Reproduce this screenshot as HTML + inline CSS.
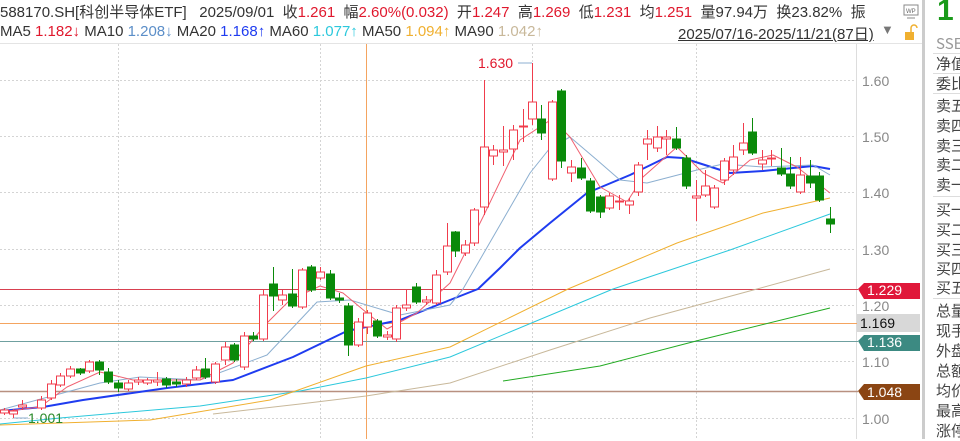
<!DOCTYPE html>
<html><head><meta charset="utf-8"><style>
body{margin:0;width:960px;height:439px;overflow:hidden;background:#fff;font-family:"Liberation Sans","Noto Sans CJK SC",sans-serif;position:relative}
.t{position:absolute;white-space:nowrap;font-size:15px;color:#333}
.r{color:#e0182d}
.rp{position:absolute;left:936px;font-size:15px;color:#444;font-family:"Noto Sans CJK SC",sans-serif;white-space:nowrap}
</style></head><body>
<div class="t" style="left:0;top:1px">588170.SH[科创半导体ETF] &nbsp; 2025/09/01 &nbsp;收<span class="r">1.261</span> &nbsp;幅<span class="r">2.60%(0.032)</span> &nbsp;开<span class="r">1.247</span> &nbsp;高<span class="r">1.269</span> &nbsp;低<span class="r">1.231</span> &nbsp;均<span class="r">1.251</span> &nbsp;量97.94万 &nbsp;换23.82% &nbsp;振</div>
<div class="t" style="left:0;top:23px">MA5 <span class="r">1.182↓</span> MA10 <span style="color:#5b8ec8">1.208↓</span> MA20 <span style="color:#1f3cf0">1.168↑</span> MA60 <span style="color:#2cc8dc">1.077↑</span> MA50 <span style="color:#f0b030">1.094↑</span> MA90 <span style="color:#c8b89a">1.042↑</span></div>
<div class="t" style="left:678px;top:23px;text-decoration:underline">2025/07/16-2025/11/21(87日)</div>
<div class="t" style="left:881px;top:22px;color:#777;font-size:13px">▼</div>
<svg style="position:absolute;left:902px;top:4px" width="18" height="38"><rect x="2" y="1" width="14" height="10" fill="#fff" stroke="#888"/><text x="4" y="9" font-size="6" fill="#666">WP</text><line x1="5" y1="14" x2="13" y2="14" stroke="#888"/><rect x="3" y="28" width="9" height="8" fill="#f0b030"/><path d="M9 28 V24 a3 3 0 0 1 6 0" fill="none" stroke="#f0b030" stroke-width="1.5"/></svg>
<svg style="position:absolute;left:0;top:0" width="925" height="439">
<line x1="0" y1="43.5" x2="925" y2="43.5" stroke="#e4e4e4"/>
<line x1="856.5" y1="44" x2="856.5" y2="439" stroke="#ddd"/>
<line x1="923.5" y1="0" x2="923.5" y2="439" stroke="#ccc" stroke-width="3"/>
<g stroke="#d4d4d4" stroke-dasharray="2,2">
<line x1="0" y1="80.5" x2="856" y2="80.5"/><line x1="0" y1="136.5" x2="856" y2="136.5"/><line x1="0" y1="192.5" x2="856" y2="192.5"/><line x1="0" y1="249.5" x2="856" y2="249.5"/><line x1="0" y1="305.5" x2="856" y2="305.5"/><line x1="0" y1="361.5" x2="856" y2="361.5"/><line x1="0" y1="418.5" x2="856" y2="418.5"/>
<line x1="118.5" y1="44" x2="118.5" y2="439"/><line x1="320.5" y1="44" x2="320.5" y2="439"/><line x1="532.5" y1="44" x2="532.5" y2="439"/><line x1="696.5" y1="44" x2="696.5" y2="439"/>
</g>
<line x1="366.5" y1="44" x2="366.5" y2="439" stroke="#f4a460"/>
<line x1="0" y1="289.5" x2="858" y2="289.5" stroke="#d84050"/>
<line x1="0" y1="323.5" x2="858" y2="323.5" stroke="#f4a460"/>
<line x1="0" y1="341.5" x2="858" y2="341.5" stroke="#6fa0a0"/>
<line x1="0" y1="391.5" x2="858" y2="391.5" stroke="#b89080" stroke-width="1.5"/>
<g fill="none" stroke-linejoin="round">
<polyline stroke="#c8b89a" points="213,414 300,404 366,396 450,383 550,350 650,318 757,289 830,269"/>
<polyline stroke="#22aa22" points="503,381 600,366 700,340 830,308"/>
<polyline stroke="#2cc8dc" points="0,424 60,418 200,406 300,391 366,378 450,357 613,289 730,250 830,214"/>
<polyline stroke="#f0b030" points="0,425 150,420 270,400 366,366 450,347 568,289 677,243 763,213 830,198"/>
<polyline stroke="#1f3cf0" stroke-width="2" points="0,411 43,407 83,400 167,388 233,380 293,357 347,331 400,320 450,300 478,289 500,268 520,248 550,223 587,193 630,175 667,157 683,158 730,173 763,171 813,166 830,169"/>
<polyline stroke="#8cafd0" points="0,410 100,383 140,377 200,380 267,355 317,302 350,300 400,315 450,305 463,289 500,225 530,173 550,148 570,137 597,160 620,180 647,183 697,170 723,164 763,167 813,165 830,175"/>
<polyline stroke="#f06070" points="0,412 40,407 67,387 100,372 133,380 200,380 233,363 267,323 290,300 320,286 343,293 367,313 387,329 417,313 450,283 483,217 520,140 552,119 570,137 600,187 627,202 643,177 677,147 703,173 723,183 750,160 773,155 797,167 830,193"/>
</g>
<g id="c"></g>
<text x="478" y="68" font-size="14" fill="#e0182d">1.630</text>
<line x1="518" y1="63" x2="532" y2="63" stroke="#8cafd0"/>
<text x="28" y="423" font-size="14" fill="#2a8a2a">1.001</text>
<line x1="14" y1="418" x2="28" y2="418" stroke="#8cafd0"/>
<g font-size="14" fill="#888"><text x="862" y="86">1.60</text><text x="862" y="142">1.50</text><text x="862" y="198">1.40</text><text x="862" y="255">1.30</text><text x="862" y="311">1.20</text><text x="862" y="367">1.10</text><text x="862" y="424">1.00</text></g>
<rect x="857" y="314" width="63" height="18" fill="#d8d8d8"/><text x="860" y="328" font-size="14" fill="#111">1.169</text>
<path d="M858 289 l6 -6 h56 v16 h-56z" fill="#e0183a"/><text x="867" y="295" font-size="14" fill="#fff">1.229</text>
<path d="M858 341 l6 -6 h56 v16 h-56z" fill="#3c8a82"/><text x="867" y="347" font-size="14" fill="#fff">1.136</text>
<path d="M858 391 l6 -7 h56 v16 h-56z" fill="#8b4513"/><text x="867" y="397" font-size="14" fill="#fff">1.048</text>
<rect x="925" y="293" width="10" height="146" fill="#eee"/>
<text x="926" y="367" font-size="11" fill="#888">»</text>
</svg>
<div style="position:absolute;left:937px;top:-6px;font-size:30px;font-weight:bold;color:#1a9a1a">1</div>
<div class="rp" style="top:33px;color:#999">SSE</div>
<div style="position:absolute;left:933px;top:53px;width:27px;border-top:1px solid #ddd"></div>
<div class="rp" style="top:53px">净值</div>
<div style="position:absolute;left:933px;top:73px;width:27px;border-top:1px solid #ddd"></div>
<div class="rp" style="top:73px">委比</div>
<div style="position:absolute;left:933px;top:93px;width:27px;border-top:1px solid #ddd"></div>
<div class="rp" style="top:95px">卖五</div><div class="rp" style="top:115px">卖四</div><div class="rp" style="top:135px">卖三</div><div class="rp" style="top:154px">卖二</div><div class="rp" style="top:174px">卖一</div>
<div style="position:absolute;left:933px;top:196px;width:27px;border-top:1px solid #ddd"></div>
<div class="rp" style="top:199px">买一</div><div class="rp" style="top:219px">买二</div><div class="rp" style="top:239px">买三</div><div class="rp" style="top:258px">买四</div><div class="rp" style="top:277px">买五</div>
<div style="position:absolute;left:933px;top:298px;width:27px;border-top:1px solid #ddd"></div>
<div class="rp" style="top:300px">总量</div><div class="rp" style="top:320px">现手</div><div class="rp" style="top:340px">外盘</div><div class="rp" style="top:360px">总额</div><div class="rp" style="top:380px">均价</div><div class="rp" style="top:400px">最高</div><div class="rp" style="top:420px">涨停</div>
<script>
var d=[[4,'r',410,413,408,415],[13,'r',411,414,409,418],[22,'r',405,407,400,410],[41,'r',400,408,396,410],[51,'r',384,398,380,400],[60,'r',376,385,373,387],[70,'r',369,376,366,378],[80,'g',369,373,368,375],[89,'r',362,371,360,373],[99,'g',362,370,360,375],[108,'g',372,382,368,384],[118,'g',383,388,380,392],[128,'r',383,389,380,391],[138,'r',380,382,377,385],[147,'r',380,383,378,385],[157,'r',380,382,372,386],[166,'g',379,385,377,388],[176,'g',382,384,379,387],[186,'r',380,384,377,387],[196,'r',370,378,366,380],[205,'g',369,377,358,379],[215,'r',364,382,362,384],[225,'r',347,360,342,365],[234,'g',345,360,343,362],[244,'r',336,367,332,370],[253,'g',336,339,332,341],[263,'r',295,339,290,341],[273,'g',284,296,267,311],[282,'r',295,300,290,305],[292,'g',294,306,269,308],[302,'r',270,307,268,309],[311,'g',267,290,265,292],[320,'r',272,278,267,280],[330,'g',274,298,270,300],[339,'g',298,300,293,303],[348,'g',306,345,303,356],[358,'r',322,345,318,347],[367,'r',313,327,310,334],[377,'g',321,336,319,338],[387,'r',335,337,331,340],[396,'r',308,339,305,342],[406,'r',305,308,290,311],[416,'g',287,302,283,304],[426,'r',300,302,296,305],[436,'r',275,303,270,305],[447,'r',246,272,223,275],[455,'g',232,251,231,257],[465,'r',245,253,240,256],[474,'r',210,243,208,246],[484,'r',147,207,80,215],[493,'r',150,156,145,165],[503,'r',150,152,126,166],[513,'r',130,149,125,160],[523,'r',126,127,109,142],[532,'r',102,119,63,125],[541,'g',119,133,105,140],[552,'r',102,179,100,181],[561,'g',91,161,89,168],[571,'r',167,173,160,182],[581,'g',168,178,158,180],[590,'g',181,211,178,213],[600,'g',197,212,195,218],[609,'r',196,208,193,210],[619,'r',201,202,195,210],[629,'r',201,205,198,214],[638,'r',165,192,162,196],[647,'r',139,144,130,160],[657,'r',137,148,126,152],[666,'r',137,139,130,155],[676,'g',139,148,127,150],[686,'g',158,186,155,189],[696,'r',196,198,180,221],[705,'r',186,195,170,197],[714,'r',188,207,185,209],[724,'r',161,180,158,185],[733,'r',157,170,145,175],[743,'r',143,150,123,155],[752,'g',132,153,118,155],[762,'r',160,164,150,170],[771,'r',158,159,150,166],[781,'g',168,174,148,176],[790,'g',174,186,157,189],[800,'r',175,192,157,194],[810,'g',176,183,160,188],[819,'g',176,200,172,202],[830,'g',219,224,207,233]];
var s='';d.forEach(function(c){var x=c[0],col=c[1]=='r'?'#f03c4c':'#0a8a0a',t=c[2],b=c[3];if(b-t<1)b=t+1;
s+='<line x1="'+(x+.5)+'" y1="'+c[4]+'" x2="'+(x+.5)+'" y2="'+c[5]+'" stroke="'+col+'"/>';
s+='<rect x="'+(x-3.5)+'" y="'+t+'" width="8" height="'+(b-t)+'" fill="'+(c[1]=='r'?'#fff':col)+'" stroke="'+col+'"/>';});
document.getElementById('c').innerHTML=s;
</script>
</body></html>
